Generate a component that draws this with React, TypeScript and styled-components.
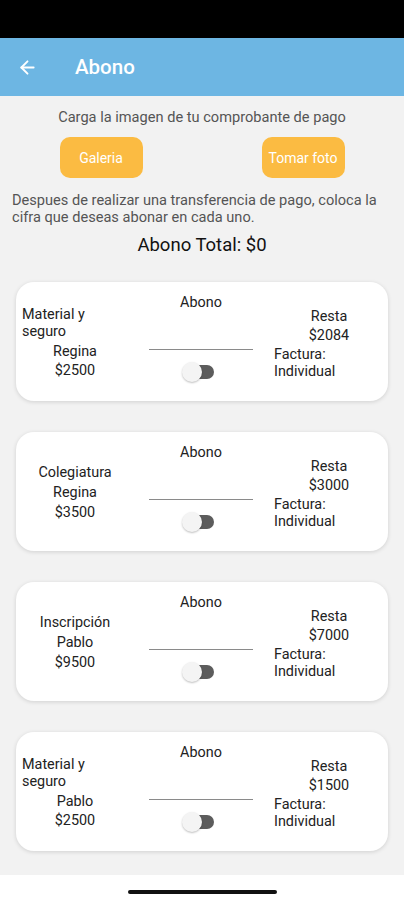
import React from "react";
import styled, { createGlobalStyle } from "styled-components";
import { ArrowLeft } from "lucide-react";

type Payment = {
  concept: string;
  student: string;
  amount: string;
  remaining: string;
  invoice: string;
};

const payments: Payment[] = [
  { concept: "Material y seguro", student: "Regina", amount: "$2500", remaining: "$2084", invoice: "Individual" },
  { concept: "Colegiatura", student: "Regina", amount: "$3500", remaining: "$3000", invoice: "Individual" },
  { concept: "Inscripción", student: "Pablo", amount: "$9500", remaining: "$7000", invoice: "Individual" },
  { concept: "Material y seguro", student: "Pablo", amount: "$2500", remaining: "$1500", invoice: "Individual" },
];

const GlobalStyle = createGlobalStyle`
  body {
    margin: 0;
    background: #f2f2f2;
    font-family: Roboto, "Liberation Sans", sans-serif;
  }
`;

const Screen = styled.div`
  width: 404px;
  height: 900px;
  display: flex;
  flex-direction: column;
  background: #f2f2f2;
  overflow: hidden;
`;

const StatusBar = styled.div`
  height: 38px;
  background: #000;
  flex-shrink: 0;
`;

const Header = styled.header`
  height: 58px;
  flex-shrink: 0;
  background: #6db6e3;
  display: flex;
  align-items: center;
  padding-left: 17px;
  color: #fff;
`;

const Title = styled.h1`
  margin: 0 0 0 37px;
  font-size: 20.5px;
  font-weight: 500;
  color: #fff;
`;

const Content = styled.main`
  flex: 1;
  overflow: hidden;
  display: flex;
  flex-direction: column;
`;

const Instruction = styled.p`
  margin: 12px 0 0;
  text-align: center;
  font-size: 14.6px;
  line-height: 19px;
  color: #555;
`;

const ButtonRow = styled.div`
  display: flex;
  justify-content: space-around;
  margin-top: 10px;
`;

const PhotoButton = styled.button`
  width: 83px;
  height: 41px;
  border: none;
  border-radius: 10px;
  background: #fbbb42;
  color: #fff;
  font-family: inherit;
  font-size: 14px;
  padding: 0;
`;

const Note = styled.p`
  margin: 14px 0 0;
  padding: 0 12px;
  font-size: 14.6px;
  line-height: 17px;
  color: #555;
`;

const Total = styled.div`
  margin-top: 8px;
  text-align: center;
  font-size: 18.5px;
  line-height: 22px;
  color: #111;
`;

const CardList = styled.div`
  display: flex;
  flex-direction: column;
  gap: 31px;
  padding: 26px 16px 0;
`;

const Card = styled.div`
  height: 119px;
  flex-shrink: 0;
  background: #fff;
  border-radius: 18px;
  box-shadow: 0 1px 4px rgba(0, 0, 0, 0.14);
  display: grid;
  grid-template-columns: 106px 104px 110px;
  column-gap: 21px;
  padding-left: 6px;
  box-sizing: border-box;
`;

const SideColumn = styled.div`
  display: flex;
  flex-direction: column;
  align-items: center;
  justify-content: center;
  padding-top: 3px;
`;

const CardText = styled.span<{ $wrapped?: boolean; $gapBelow?: boolean }>`
  display: block;
  font-size: 14.4px;
  line-height: ${(p) => (p.$wrapped ? "17px" : "19.5px")};
  margin-bottom: ${(p) => (p.$gapBelow ? "2px" : "0")};
  color: #222;
  text-align: left;
`;

const MiddleColumn = styled.div`
  display: flex;
  flex-direction: column;
  align-items: center;
  padding-top: 11px;
`;

const AmountInput = styled.div`
  align-self: stretch;
  height: 36px;
  border-bottom: 1px solid #8a8a8a;
`;

const Switch = styled.div`
  position: relative;
  width: 32px;
  height: 20px;
  margin: 12px 6px 0 0;
`;

const Track = styled.div`
  position: absolute;
  left: 2px;
  right: 0;
  top: 3px;
  height: 14px;
  border-radius: 7px;
  background: #5c5c5c;
`;

const Thumb = styled.div`
  position: absolute;
  left: 0;
  top: 0;
  width: 20px;
  height: 20px;
  border-radius: 50%;
  background: #f4f4f4;
  box-shadow: 0 1px 2px rgba(0, 0, 0, 0.25);
`;

const NavBar = styled.div`
  height: 25px;
  flex-shrink: 0;
  background: #fff;
  display: flex;
  justify-content: center;
  align-items: center;
`;

const Handle = styled.div`
  width: 149px;
  height: 4px;
  border-radius: 2px;
  background: #111;
  margin-top: 8px;
`;

const PaymentCard: React.FC<{ payment: Payment }> = ({ payment }) => (
  <Card>
    <SideColumn>
      <CardText $wrapped $gapBelow>
        {payment.concept}
      </CardText>
      <CardText>{payment.student}</CardText>
      <CardText>{payment.amount}</CardText>
    </SideColumn>
    <MiddleColumn>
      <CardText>Abono</CardText>
      <AmountInput />
      <Switch>
        <Track />
        <Thumb />
      </Switch>
    </MiddleColumn>
    <SideColumn>
      <CardText>Resta</CardText>
      <CardText>{payment.remaining}</CardText>
      <CardText $wrapped>Factura: {payment.invoice}</CardText>
    </SideColumn>
  </Card>
);

const App: React.FC = () => {
  return (
    <Screen>
      <GlobalStyle />
      <StatusBar />
      <Header>
        <ArrowLeft size={21} strokeWidth={2.2} color="#fff" />
        <Title>Abono</Title>
      </Header>
      <Content>
        <Instruction>Carga la imagen de tu comprobante de pago</Instruction>
        <ButtonRow>
          <PhotoButton>Galeria</PhotoButton>
          <PhotoButton>Tomar foto</PhotoButton>
        </ButtonRow>
        <Note>
          Despues de realizar una transferencia de pago, coloca la cifra que deseas abonar en cada uno.
        </Note>
        <Total>Abono Total: $0</Total>
        <CardList>
          {payments.map((p, i) => (
            <PaymentCard key={i} payment={p} />
          ))}
        </CardList>
      </Content>
      <NavBar>
        <Handle />
      </NavBar>
    </Screen>
  );
};

export default App;
